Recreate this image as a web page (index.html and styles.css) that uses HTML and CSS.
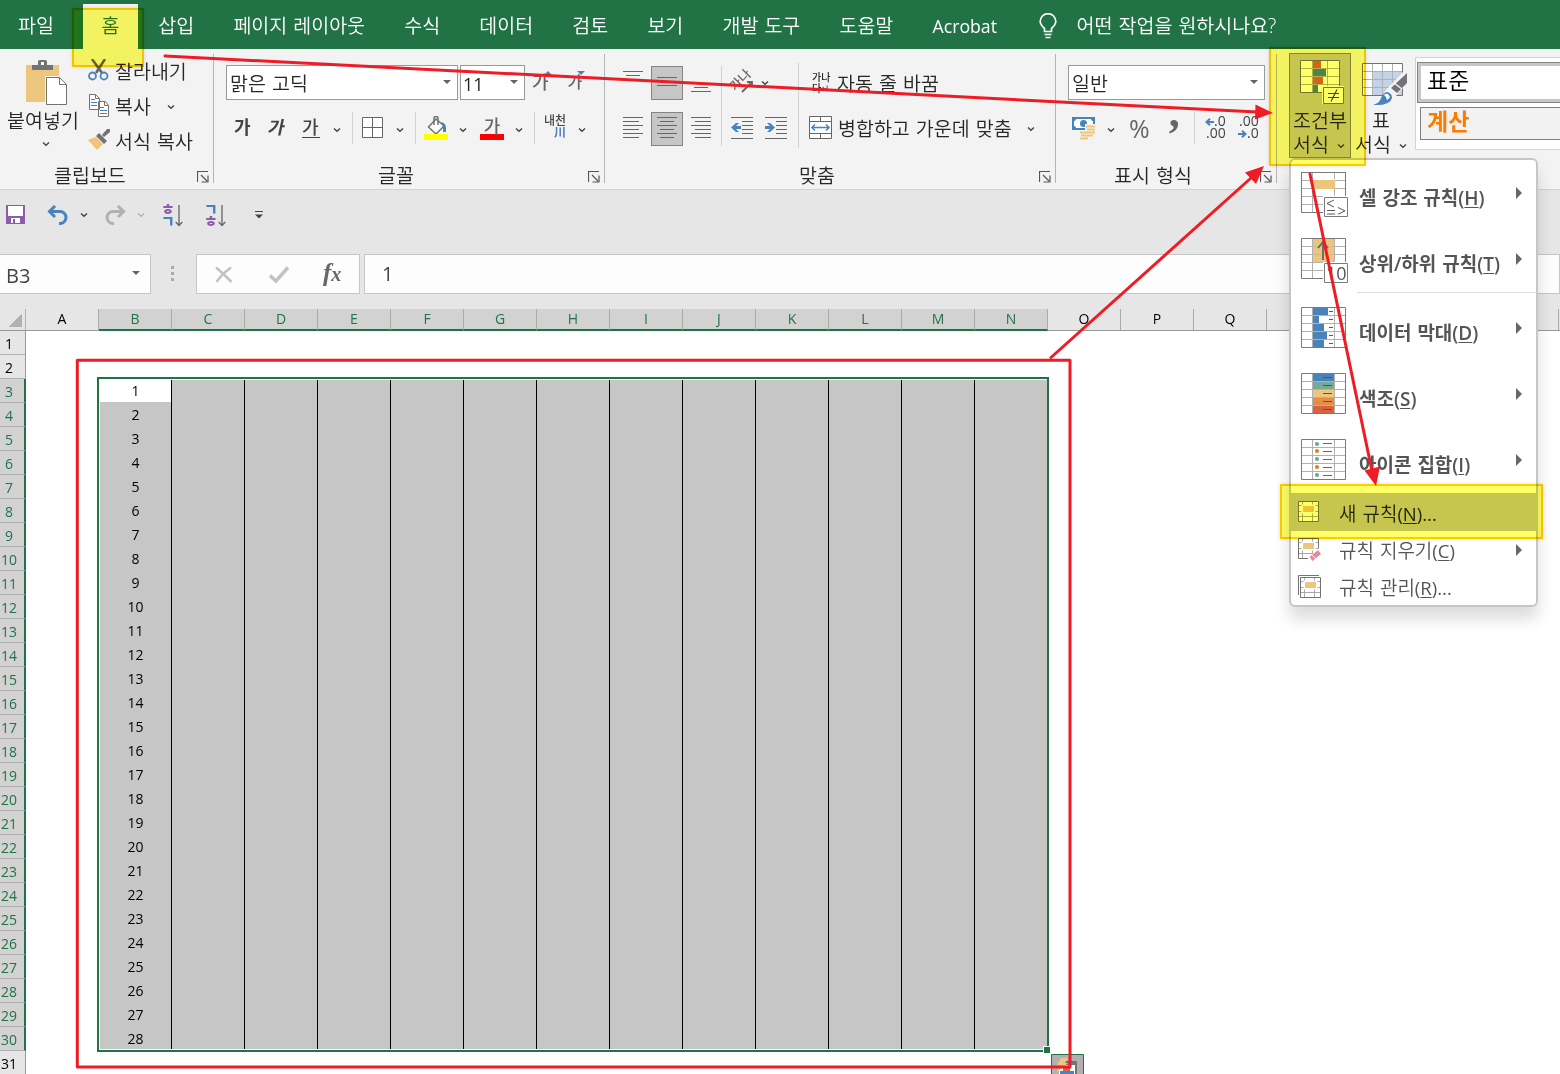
FILE: index.html
```html
<!DOCTYPE html>
<html lang="ko">

<head>
    <meta charset="UTF-8">
    <meta name="viewport" content="width=device-width, initial-scale=1.0">
    <title>조건부 서식</title>
    <link rel="stylesheet" href="styles.css">
</head>

<body>
    <!-- 공용 아이콘 -->
    <svg class="defs">
        <symbol id="chev" viewBox="0 0 8 6"><path d="M1 1.500 4 4.300 7 1.500" fill="none" stroke="currentColor" stroke-width="1.400"/></symbol>
        <symbol id="launch" viewBox="0 0 12 12"><path d="M.5 11V.5H11M4 4l6 6M11 4.500V11H4.500" fill="none" stroke="#555" stroke-width="1.200"/></symbol>
        <symbol id="table" viewBox="0 0 45 41"><path d="M0 0h45v41H0z" fill="#fff"/><path d="M11.500 0v41M33.500 0v41M0 8.500h45M0 16.500h45M0 24.500h45M0 32.500h45" stroke="#b1b1b1" fill="none"/><path d="M.5.5h44v40H.5z" fill="none" stroke="#7a7a7a"/></symbol>
        <symbol id="smalltable" viewBox="0 0 21 21"><path d="M.5.5h20v20H.5z" fill="#fff"/><path d="M4.500 1v19M14.500 1v19M1 4.500h19M1 10.500h19M1 15.500h19" stroke="#aaa" fill="none"/><path d="M3.500 3.500h14v9h-14z" fill="#fff"/><path d="M5 5h11v6H5z" fill="#edc57c"/><path d="M.5.5h20v20H.5z" fill="none" stroke="#737373"/></symbol>
    </svg>

    <!-- 리본 탭 -->
    <div class="tabs">
        <a class="tab first">파일</a>
        <a class="tab on">홈</a>
        <a class="tab">삽입</a>
        <a class="tab">페이지 레이아웃</a>
        <a class="tab">수식</a>
        <a class="tab">데이터</a>
        <a class="tab">검토</a>
        <a class="tab">보기</a>
        <a class="tab">개발 도구</a>
        <a class="tab">도움말</a>
        <a class="tab latin">Acrobat</a>
        <svg class="bulb" width="18" height="26" viewBox="0 0 18 26"><path d="M5.500 18.500v-3C3 13 1.200 11.500 1.200 8.500a7.800 7.800 0 0 1 15.600 0c0 3-1.800 4.500-4.300 7v3z M5.500 21.500h7M6.500 24.500h5" fill="none" stroke="#fff" stroke-width="1.700"/></svg>
        <span class="tell">어떤 작업을 원하시나요?</span>
    </div>

    <!-- 리본 -->
    <div class="ribbon">
        <div class="group clip">
            <div class="body">
                <div class="paste">
                    <svg width="42" height="46" viewBox="0 0 42 46"><path d="M0 5h33v37H0z" fill="#edc57c"/><path d="M6 5h6V1.500Q12 0 14 0h5q2 0 2 1.500V5h6v5H6z" fill="#737373"/><path d="M15 2h3v3h-3z" fill="#fff"/><path d="M19 16h22v30H19z" fill="#f3f3f3"/><path d="M20.500 17.500h13l7 7v20h-20z" fill="#fff" stroke="#737373"/><path d="M33.500 17.500v7h7" fill="none" stroke="#737373"/></svg>
                    <span>붙여넣기</span>
                    <svg class="chev"><use href="#chev"/></svg>
                </div>
                <div class="cliplist">
                    <div class="line"><svg width="22" height="22" viewBox="0 0 22 22"><path d="M4 0l10 14M17 0L8 14" stroke="#666" stroke-width="2.600" fill="none"/><circle cx="4.500" cy="17" r="3.500" fill="none" stroke="#4a82ba" stroke-width="1.800"/><circle cx="16" cy="17" r="3.500" fill="none" stroke="#4a82ba" stroke-width="1.800"/></svg>잘라내기</div>
                    <div class="line"><svg width="22" height="23" viewBox="0 0 22 23"><g fill="#fff" stroke="#737373"><path d="M1.500.5h6l4 4v11h-10zM10.500 7.500h7l3 4v11h-10z"/><path d="M7.500.5v4h4M16.500 7.500v4h4" fill="none"/></g><path d="M3 5.500h4M3 8.500h6M3 11.500h6M12 13.500h4M12 16.500h7M12 19.500h7" stroke="#4a82ba"/></svg>복사<svg class="chev"><use href="#chev"/></svg></div>
                    <div class="line"><svg width="22" height="22" viewBox="0 0 22 22"><path d="M0 11l8-3 7 7-6 6z" fill="#edc57c"/><path d="M8 7l3-3 8 8-3 3zM14 6l5-6h3v3l-6 5z" fill="#737373"/></svg>서식 복사</div>
                </div>
            </div>
            <div class="name">클립보드<svg class="launch"><use href="#launch"/></svg></div>
        </div>

        <div class="group font">
            <div class="body rows">
                <div class="row">
                    <div class="select face">맑은 고딕<i class="tri"></i></div>
                    <div class="select size">11<i class="tri"></i></div>
                    <b class="grow">가<i class="up"></i></b>
                    <b class="shrink">가<i class="down"></i></b>
                </div>
                <div class="row second">
                    <b class="ga">가</b><b class="ga it">가</b><b class="ga un">가</b>
                    <svg class="chev c1"><use href="#chev"/></svg>
                    <i class="bar"></i>
                    <svg width="21" height="21" viewBox="0 0 21 21"><path d="M.5.5h20v20H.5zM10.500 0v21M0 10.500h21" fill="#fff" stroke="#666"/></svg>
                    <svg class="chev c2"><use href="#chev"/></svg>
                    <i class="bar b2"></i>
                    <svg class="fill" width="24" height="24" viewBox="0 0 24 24"><path d="M12 3l8 7-8 8-7.500-7z" fill="#fff" stroke="#737373" stroke-width="1.500"/><path d="M10 9V2q0-1.500 2-1.500T14 2v7" fill="none" stroke="#737373" stroke-width="1.500"/><path d="M17 6q5 1 5 6v4h-3v-6z" fill="#4a82ba"/><path d="M0 18h24v6H0z" fill="#ff0"/></svg>
                    <svg class="chev c3"><use href="#chev"/></svg>
                    <b class="fcolor">가</b>
                    <svg class="chev c3"><use href="#chev"/></svg>
                    <i class="bar b3"></i>
                    <span class="phon">내천<em>川</em></span>
                    <svg class="chev c4"><use href="#chev"/></svg>
                </div>
            </div>
            <div class="name">글꼴<svg class="launch"><use href="#launch"/></svg></div>
        </div>

        <div class="group align">
            <div class="body">
                <div class="aligns">
                    <svg width="32" height="34" viewBox="0 0 32 34"><path d="M6 5.500h20M9 9.500h14" stroke="#666"/></svg>
                    <svg class="on" width="32" height="34" viewBox="0 0 32 34"><path d="M6 11.500h20M6 19.500h20" stroke="#666"/></svg>
                    <svg width="32" height="34" viewBox="0 0 32 34"><path d="M9 21.500h14M6 25.500h20" stroke="#666"/></svg>
                    <svg width="32" height="34" viewBox="0 0 32 34"><path d="M6 5.500h20M6 9.500h16M6 13.500h20M6 17.500h16M6 21.500h20M6 25.500h16" stroke="#666"/></svg>
                    <svg class="on" width="32" height="34" viewBox="0 0 32 34"><path d="M6 5.500h20M9 9.500h14M6 13.500h20M9 17.500h14M6 21.500h20M9 25.500h14" stroke="#666"/></svg>
                    <svg width="32" height="34" viewBox="0 0 32 34"><path d="M6 5.500h20M10 9.500h16M6 13.500h20M10 17.500h16M6 21.500h20M10 25.500h16" stroke="#666"/></svg>
                </div>
                <div class="indents">
                    <div class="orient"><span>가나</span><svg width="16" height="16" viewBox="0 0 16 16"><path d="M1 15L11 5M6 5h5v5" fill="none" stroke="#666" stroke-width="1.800"/></svg><svg class="chev"><use href="#chev"/></svg></div>
                    <div class="ind">
                        <svg width="23" height="22" viewBox="0 0 23 22"><path d="M0 .5h22M11 4.500h11M11 8.500h11M11 12.500h11M11 16.500h11M0 21.500h22" stroke="#666"/><path d="M0 10.500l5-4.500h3l-3 3h5v3H5l3 3H5z" fill="#4a82ba"/></svg>
                        <svg width="23" height="22" viewBox="0 0 23 22"><path d="M0 .5h22M11 4.500h11M11 8.500h11M11 12.500h11M11 16.500h11M0 21.500h22" stroke="#666"/><path d="M10 10.500L5 6H2l3 3H0v3h5l-3 3h3z" fill="#4a82ba"/></svg>
                    </div>
                </div>
                <div class="merge">
                    <div class="wraptext"><span class="mini">가나<br>다<em>↵</em></span>자동 줄 바꿈</div>
                    <div class="mergetext"><svg width="23" height="23" viewBox="0 0 23 23"><path d="M.5.5h22v22H.5zM0 5.500h23M0 17.500h23M11.500 0v5M11.500 18v5" fill="#fff" stroke="#666"/><path d="M3 11.500h17M6 8.500l-3 3 3 3M17 8.500l3 3-3 3" fill="none" stroke="#4a82ba" stroke-width="1.500"/></svg>병합하고 가운데 맞춤<svg class="chev"><use href="#chev"/></svg></div>
                </div>
            </div>
            <div class="name">맞춤<svg class="launch"><use href="#launch"/></svg></div>
        </div>

        <div class="group number">
            <div class="body rows">
                <div class="row">
                    <div class="select format">일반<i class="tri"></i></div>
                </div>
                <div class="row second">
                    <svg class="money" width="24" height="23" viewBox="0 0 24 23"><path d="M0 0h23v13H0z" fill="#4a82ba"/><path d="M2 4q2 0 2-2h15q0 2 2 2v5q-2 0-2 2H4q0-2-2-2z" fill="#fff"/><circle cx="11.500" cy="6.500" r="3.500" fill="#4a82ba"/><path d="M13 7h11v16H7v-9h6z" fill="#f3f3f3"/><path d="M14 9.500h9M15 12.500h8M14 15.500h9M8 15.500h8M9 18.500h8M8 21.500h8M16 18.500h5" stroke="#edc57c" stroke-width="2.200"/></svg>
                    <svg class="chev c1"><use href="#chev"/></svg>
                    <span class="pct">%</span>
                    <span class="comma">,</span>
                    <i class="bar"></i>
                    <span class="dec"><svg width="9" height="8" viewBox="0 0 9 8"><path d="M9 4H1.500M5 .8L1.500 4 5 7.200" fill="none" stroke="#4a82ba" stroke-width="2"/></svg>.0<br>.00</span>
                    <span class="dec">.00<br><svg width="9" height="8" viewBox="0 0 9 8"><path d="M0 4h7.500M4 .8L7.500 4 4 7.200" fill="none" stroke="#4a82ba" stroke-width="2"/></svg>.0</span>
                </div>
            </div>
            <div class="name">표시 형식<svg class="launch"><use href="#launch"/></svg></div>
        </div>

        <div class="styles">
            <div class="cond">
                <svg width="44" height="44" viewBox="0 0 44 44"><path d="M.5.5h39v32H.5z" fill="#fff"/><path d="M13 1h8v7h-8zM13 17h10v7H13z" fill="#d96241"/><path d="M13 9h13v7H13zM13 25h5v7h-5z" fill="#4d84b8"/><path d="M12.500 0v33M27.500 0v33M0 8.500h40M0 16.500h40M0 24.500h40" stroke="#b1b1b1"/><path d="M.5.5h39v32H.5z" fill="none" stroke="#737373"/><path d="M22 26h22v18H22z" fill="#fff"/><path d="M23.500 27.500h20v16h-20z" fill="#fff" stroke="#737373"/><path d="M28 33.500h11M28 37.500h11M37 29.500l-6 12" stroke="#444" stroke-width="1.200"/></svg>
                <span>조건부</span>
                <span>서식 <svg class="chev"><use href="#chev"/></svg></span>
            </div>
            <div class="fmt">
                <svg width="45" height="44" viewBox="0 0 45 44"><path d="M.5.5h40v32H.5z" fill="#fff"/><path d="M11 8h30v24H11z" fill="#c2d3e8"/><path d="M10.500 0v33M20.500 0v33M30.500 0v33M0 8.500h41M0 16.500h41M0 24.500h41" stroke="#b1b1b1"/><path d="M.5.5h40v32H.5z" fill="none" stroke="#737373"/><path d="M42 8L24 27l-9 15h14l4-8 12-14V8z" fill="#f3f3f3"/><path d="M45 10v10L35 30l-6-5z" fill="#737373"/><path d="M32 20l8 6" stroke="#f3f3f3" stroke-width="1.500"/><path d="M11 42q7-2 8-7 2-5 6-6 5 1 5 6-2 8-19 7z" fill="#4a82ba"/><path d="M22 32q2-2 4-1l2 3q-1 2-3 3 0-3-3-5z" fill="#fff"/></svg>
                <span>표</span>
                <span>서식 <svg class="chev"><use href="#chev"/></svg></span>
            </div>
            <div class="gallery">
                <div class="cell normal">표준</div>
                <div class="cell calc">계산</div>
            </div>
        </div>
    </div>

    <!-- 빠른 실행 도구 -->
    <div class="quick">
        <svg class="save" width="19" height="19" viewBox="0 0 19 19"><path d="M0 0h19v19H0z" fill="#8e5bae"/><path d="M2 1h15v10H2zM5 13h9v5H5z" fill="#fff"/><path d="M7 14h2v4H7z" fill="#8e5bae"/></svg>
        <svg class="undo" width="22" height="20" viewBox="0 0 22 20"><path d="M8 1L2.500 6.500 8 12M3 6.500h10a6 6 0 0 1 0 12h-1" fill="none" stroke="#4a82ba" stroke-width="3"/></svg>
        <svg class="chev q1"><use href="#chev"/></svg>
        <svg class="redo" width="22" height="20" viewBox="0 0 22 20"><path d="M14 1l5.500 5.500L14 12M19 6.500H9a6 6 0 0 0 0 12h1" fill="none" stroke="#b1b1b1" stroke-width="3"/></svg>
        <svg class="chev q2"><use href="#chev"/></svg>
        <span class="sort"><b>ㅎ</b><b class="blue">ㄱ</b></span>
        <svg class="sortarrow" width="8" height="22" viewBox="0 0 8 22"><path d="M4 0v20.500M.7 17L4 20.500 7.300 17" fill="none" stroke="#666" stroke-width="1.300"/></svg>
        <span class="sort s2"><b class="blue">ㄱ</b><b>ㅎ</b></span>
        <svg class="sortarrow" width="8" height="22" viewBox="0 0 8 22"><path d="M4 0v20.500M.7 17L4 20.500 7.300 17" fill="none" stroke="#666" stroke-width="1.300"/></svg>
        <svg class="custom" width="8" height="8" viewBox="0 0 8 8"><path d="M0 .5h8" stroke="#444"/><path d="M0 3.500h8l-4 4z" fill="#444"/></svg>
    </div>

    <!-- 수식 입력줄 -->
    <div class="formula">
        <div class="namebox">B3<i class="tri"></i></div>
        <div class="dots"><i></i><i></i><i></i></div>
        <div class="fx">
            <svg width="18" height="18" viewBox="0 0 18 18"><path d="M1 1.500Q9 8 16.500 16M16 1.500Q7 8 1.500 16" fill="none" stroke="#c3c3c3" stroke-width="2.600"/></svg>
            <svg width="20" height="18" viewBox="0 0 20 18"><path d="M1 9.500L7 15 19 1.500" fill="none" stroke="#c3c3c3" stroke-width="3.500"/></svg>
            <em>f<small>x</small></em>
        </div>
        <div class="input">1</div>
    </div>

    <!-- 시트 -->
    <div class="sheet">
        <div class="cols"><div class="corner"></div></div>
        <div class="main">
            <div class="rownums"></div>
            <div class="cells">
                <div class="select-area">
                    <i class="handle"></i>
                </div>
            </div>
        </div>
        <svg class="analysis" width="33" height="20" viewBox="0 0 33 20"><path d="M.5.5h32v24H.5z" fill="#b1b1b1" stroke="#217346"/><path d="M13 7h12v15H8v-8z" fill="#fff"/><path d="M14 7h12v14h-2V11H14z" fill="#737373"/><path d="M12 13h7v4h-7z" fill="#d96241"/><path d="M9 17h14v5H9z" fill="#4a82ba"/><path d="M10 4h7l-3 5h3L5 19l4-8H6z" fill="#edc57c"/></svg>
    </div>

    <!-- 조건부 서식 메뉴 -->
    <div class="menu">
        <div class="item big">
            <svg width="48" height="46" viewBox="0 0 48 46"><use href="#table" width="45" height="41"/><path d="M11 1h23v40H11z" fill="#fff"/><path d="M11.500 1v40M33.500 1v6M33.500 17v8" stroke="#b1b1b1"/><path d="M12 8h22v9H12z" fill="#edc57c"/><path d="M12 24.500h12M12 32.500h12" stroke="#b1b1b1"/><path d="M.5.5h44v40H.5z" fill="none" stroke="#7a7a7a"/><path d="M22 24h26v22H22z" fill="#fff"/><path d="M23.500 25.500h23v19h-23z" fill="#fff" stroke="#7a7a7a"/><path d="M33 28l-7 3.500 7 3.500M26 38.500h8M26 42h8M37 35.500l7 3.300-7 3.500" fill="none" stroke="#555"/></svg>
            <span>셀 강조 규칙(<u>H</u>)</span><i class="sub"></i>
        </div>
        <div class="item big">
            <svg width="48" height="46" viewBox="0 0 48 46"><use href="#table" width="45" height="41"/><path d="M12 1h21v23H12z" fill="#edc57c"/><path d="M12 8.500h21M12 16.500h21" stroke="#d2b98b"/><path d="M22 22V5M17 10l5-6 5 6" fill="none" stroke="#666" stroke-width="1.800"/><path d="M22 24h26v22H22z" fill="#fff"/><path d="M23.500 25.500h23v19h-23z" fill="#fff" stroke="#7a7a7a"/><text x="25" y="42" class="ten">10</text></svg>
            <span>상위/하위 규칙(<u>T</u>)</span><i class="sub"></i>
        </div>
        <div class="rule"></div>
        <div class="item big">
            <svg width="48" height="46" viewBox="0 0 48 46"><use href="#table" width="45" height="41"/><path d="M12 1h15v7H12zM12 9h6v7h-6zM12 17h11v7H12zM12 25h14v7H12zM12 33h11v7H12z" fill="#4a82ba"/><path d="M28 4.500h4M28 12.500h4M28 20.500h4M28 28.500h4M28 36.500h4" stroke="#555"/></svg>
            <span>데이터 막대(<u>D</u>)</span><i class="sub"></i>
        </div>
        <div class="item big">
            <svg width="48" height="46" viewBox="0 0 48 46"><use href="#table" width="45" height="41"/><path d="M12 1h21v7H12z" fill="#4a82ba"/><path d="M12 9h21v7H12z" fill="#76aa98"/><path d="M12 17h21v7H12z" fill="#edc57c"/><path d="M12 25h21v7H12z" fill="#e58c45"/><path d="M12 33h21v7H12z" fill="#d96241"/><path d="M22 4.500h9M22 12.500h9M22 20.500h9M22 28.500h9M22 36.500h9" stroke="#555"/></svg>
            <span>색조(<u>S</u>)</span><i class="sub"></i>
        </div>
        <div class="item big">
            <svg width="48" height="46" viewBox="0 0 48 46"><use href="#table" width="45" height="41"/><g fill="#6ba594"><circle cx="16" cy="5" r="2"/><circle cx="16" cy="20" r="2"/><circle cx="16" cy="36" r="2"/></g><g fill="#e87722"><circle cx="16" cy="12" r="2"/><circle cx="16" cy="28" r="2"/></g><path d="M22 4.500h9M22 12.500h9M22 20.500h9M22 28.500h9M22 36.500h9" stroke="#666"/></svg>
            <span>아이콘 집합(<u>I</u>)</span><i class="sub"></i>
        </div>
        <div class="item hover">
            <svg width="24" height="24" viewBox="0 0 24 24"><use href="#smalltable" width="21" height="21"/></svg>
            <span>새 규칙<s>(<u>N</u>)...</s></span>
        </div>
        <div class="item">
            <svg width="24" height="24" viewBox="0 0 24 24"><use href="#smalltable" width="21" height="21"/><path d="M22 9h2v15H10v-4l10-9z" fill="#fff"/><path d="M11.500 19l8.500-7 3 4-8.500 7z" fill="#e68aa0"/><path d="M14 17l4 4" stroke="#fff"/></svg>
            <span>규칙 지우기<s>(<u>C</u>)</s></span><i class="sub"></i>
        </div>
        <div class="item">
            <svg width="24" height="24" viewBox="0 0 24 24"><path d="M.5 20V.5H21" fill="none" stroke="#737373"/><use href="#smalltable" x="2" y="2" width="21" height="21"/></svg>
            <span>규칙 관리<s>(<u>R</u>)...</s></span>
        </div>
    </div>

    <!-- 강조 표시와 화살표 -->
    <div class="mark m1"></div>
    <div class="mark m2"></div>
    <div class="mark m3"></div>
    <svg class="arrows" width="1560" height="1074" viewBox="0 0 1560 1074">
        <g fill="none" stroke="#ee1c25" stroke-width="3" stroke-linecap="round">
            <path d="M77.300 360.300h992.700v706.700H77.300z" stroke-linejoin="round"/>
            <path d="M165 56l1092 56M1051 357.500l200-179.500M1310 174l62 297"/>
        </g>
        <path d="M1273 113l-18 6.500.5-15zM1264 166l-8 18-11-11.500zM1376 486l-11.500-15.500 15.500-4z" fill="#ee1c25"/>
    </svg>

    <script src="script.js"></script>
</body>

</html>
```
FILE: styles.css
```css
* {
    margin: 0;
    padding: 0;
    box-sizing: border-box;
}

body {
    width: 1560px;
    height: 1074px;
    overflow: hidden;
    position: relative;
    background-color: #fff;
    font-family: "Open Sans", "Noto Sans CJK KR", sans-serif;
    font-size: 19.5px;
    font-weight: 350;
    line-height: 24px;
    color: #262626;
    word-spacing: 1px;
}

svg {
    display: block;
    flex: none;
}

i,
em {
    font-style: normal;
}

s {
    font-weight: 400;
    text-decoration: none;
}

.defs {
    position: absolute;
    width: 0;
    height: 0;
}

.chev {
    width: 8px;
    height: 6px;
    color: #444;
}

.tri {
    border: 4px solid transparent;
    border-top-color: #666;
    border-bottom: 0;
}

/* 탭 */
.tabs {
    display: flex;
    height: 49px;
    padding-top: 4px;
    background-color: #217346;
    color: #fff;
}

.tab {
    padding: 0 19.6px;
    line-height: 44px;
    white-space: nowrap;
}

.tab.first {
    width: 83px;
    padding-left: 18px;
}

.tab.on {
    width: 55px;
    padding: 0;
    text-align: center;
    background-color: #f3f3f3;
    color: #217346;
}

.tab.on + .tab {
    padding-left: 20.3px;
}

.tab.latin {
    font-size: 17.7px;
    line-height: 45px;
    font-weight: 400;
}

.bulb {
    margin: 9px 20px 0 22px;
}

.tell {
    line-height: 44px;
}

/* 리본 */
.ribbon {
    display: flex;
    height: 141px;
    background-color: #f3f3f3;
    border-bottom: 1px solid #d2d2d2;
}

.group {
    height: 129px;
    margin-top: 5px;
    border-right: 1px solid #b5b5b5;
    flex: none;
}

.body {
    display: flex;
    height: 108px;
}

.rows {
    flex-direction: column;
}

.name {
    display: flex;
    justify-content: center;
    height: 24px;
    line-height: 26px;
    padding-left: 12px;
    margin-top: 1px;
}

.name .launch {
    width: 12px;
    height: 12px;
    margin: 8px 4px 0 auto;
}

.row {
    display: flex;
    height: 35px;
    margin-top: 11px;
}

.row.second {
    height: 34px;
    margin-top: 12px;
}

.bar {
    width: 1px;
    height: 32px;
    background-color: #d2d2d2;
}

.select {
    display: flex;
    align-items: center;
    justify-content: space-between;
    height: 35px;
    padding: 2px 6px 0 3px;
    border: 1px solid #999;
    background-color: #fff;
    white-space: nowrap;
}

.select .tri {
    margin-top: -3px;
}

.clip {
    width: 214px;
}

.clip .name {
    padding-left: 54px;
}

.paste {
    width: 86px;
    display: flex;
    flex-direction: column;
    align-items: center;
}

.paste svg:first-child {
    margin: 6px 0 0 7px;
}

.paste .chev {
    margin: 8px 0 0 5px;
}

.paste span {
    margin-top: 3px;
}

.cliplist .line {
    display: flex;
    height: 35px;
    align-items: center;
    gap: 5px;
    margin-left: 2px;
}

.line > svg:first-child {
    margin-top: -3px;
}

.line .chev {
    margin-left: 11px;
}

.font {
    width: 391px;
}

.font .name {
    padding-left: 164px;
}

.face {
    width: 232px;
    margin-left: 12px;
}

.size {
    width: 65px;
    margin-left: 2px;
    padding-left: 2px;
    font-size: 18px;
    font-weight: 400;
}

.grow,
.shrink,
.ga,
.fcolor {
    color: #666;
    font-weight: 500;
    position: relative;
    line-height: 34px;
    font-size: 18px;
}

.grow {
    margin-left: 7px;
}

.shrink {
    margin-left: 19px;
    font-size: 16px;
}

.up,
.down {
    position: absolute;
    top: 6px;
    right: -3px;
    border: 4px solid transparent;
}

.up {
    top: 2px;
    border-bottom-color: #4a82ba;
}

.down {
    border-top-color: #4a82ba;
}

.second .ga {
    width: 18px;
    font-weight: 700;
    color: #444;
    margin-left: 20px;
    line-height: 30px;
}

.second .ga + .ga {
    margin-left: 16px;
}

.ga.it {
    transform: skewX(-12deg);
}

.second .ga.un {
    height: 26px;
    font-weight: 500;
    border-bottom: 1px solid #444;
}

.second .chev {
    margin-top: 15px;
}

.second .c1 {
    margin-left: 13px;
}

.font .second svg:nth-of-type(2) {
    margin: 5px 0 0 9px;
}

.second .bar {
    margin-left: 11px;
}

.second .c2 {
    margin-left: 13px;
}

.second .b2 {
    margin-left: 11px;
}

.fill {
    margin: 4px 0 0 8px;
}

.second .c3 {
    margin-left: 11px;
}

.fcolor {
    width: 24px;
    height: 28px;
    margin-left: 13px;
    text-align: center;
    border-bottom: 6px solid #f00;
    line-height: 28px;
}

.second .b3 {
    margin-left: 11px;
}

.phon {
    display: flex;
    flex-direction: column;
    width: 22px;
    margin-left: 9px;
    font-size: 12px;
    font-weight: 500;
    line-height: 12px;
    padding-top: 3px;
    white-space: nowrap;
    color: #444;
}

.phon em {
    color: #4a82ba;
    align-self: flex-end;
    font-weight: 700;
}

.second .c4 {
    margin-left: 12px;
}

/* 맞춤 */
.align {
    width: 451px;
}

.align .name {
    padding-left: 194px;
}

.aligns {
    display: grid;
    grid-template-columns: repeat(3, 32px);
    grid-auto-rows: 34px;
    column-gap: 2px;
    row-gap: 12px;
    margin: 12px 0 0 12px;
}

.aligns .on {
    background-color: #c6c6c6;
    outline: 1px solid #858585;
    outline-offset: -1px;
}

.indents {
    width: 77px;
    height: 80px;
    margin: 12px 0 0 4px;
    border-left: 1px solid #d2d2d2;
}

.orient {
    display: flex;
    height: 46px;
    padding-left: 6px;
}

.orient span {
    transform: rotate(-45deg);
    font-size: 13px;
    font-weight: 500;
    width: 28px;
    height: 26px;
    color: #666;
}

.orient svg {
    margin: 11px 0 0 -15px;
}

.orient .chev {
    margin: 14px 0 0 4px;
}

.ind {
    display: flex;
    gap: 11px;
    padding: 5px 0 0 9px;
}

.merge {
    height: 85px;
    margin-top: 9px;
    border-left: 1px solid #d2d2d2;
}

.wraptext {
    display: flex;
    height: 42px;
    padding: 9px 0 0 13px;
}

.mini {
    width: 25px;
    font-size: 10px;
    line-height: 11px;
    font-weight: 500;
}

.mini em {
    color: #4a82ba;
    font-weight: 700;
}

.mergetext {
    display: flex;
    align-items: center;
    height: 48px;
    padding: 0 0 0 10px;
    white-space: nowrap;
    gap: 6px;
}

.mergetext svg:first-child {
    margin-top: -3px;
}

.mergetext .chev {
    margin-left: 9px;
}

/* 표시 형식 */
.number {
    width: 221px;
}

.number .name {
    padding-left: 58px;
}

.format {
    width: 197px;
    margin-left: 12px;
}

.money {
    margin: 5px 0 0 16px;
}

.second .money + .chev {
    margin-left: 11px;
}

.pct {
    margin: 4px 0 0 14px;
    font-size: 25px;
    font-weight: 400;
    color: #666;
}

.comma {
    width: 12px;
    margin: -11px 0 0 19px;
    font-size: 44px;
    font-weight: 700;
    font-family: "Liberation Serif", serif;
    color: #666;
}

.number .second .bar {
    margin-left: 13px;
}

.dec {
    width: 25px;
    margin: 3px 0 0 6px;
    font-size: 14px;
    font-weight: 400;
    line-height: 12px;
    color: #444;
    text-align: right;
}

.dec + .dec {
    margin-left: 8px;
}

.dec svg {
    display: inline-block;
}

.styles {
    display: flex;
    height: 140px;
    overflow: hidden;
}

.cond,
.fmt {
    display: flex;
    flex-direction: column;
    align-items: center;
    width: 62px;
    white-space: nowrap;
}

.cond {
    height: 105px;
    margin: 4px 0 0 12px;
    background-color: #c6c6c6;
    border: 1px solid #858585;
    flex: none;
}

.cond > svg {
    margin: 6px 0 5px 3px;
}

.cond span:last-child {
    margin-left: -2px;
}

.fmt {
    margin: 4px 0 0 -1px;
    flex: none;
}

.fmt > svg {
    margin: 10px 0 2px 7px;
}

.styles .chev {
    display: inline-block;
    margin-left: 2px;
    vertical-align: 3px;
}

.gallery {
    width: 200px;
    height: 93px;
    margin: 8px 0 0 3px;
    padding: 4px 0 0 1px;
    border: 1px solid #d2d2d2;
    background-color: #fff;
    flex: none;
}

.cell.normal {
    height: 41px;
    border: 1px solid #858585;
    outline: 3px solid #c6c6c6;
    outline-offset: -4px;
    line-height: 34px;
    padding-left: 9px;
    color: #000;
    font-size: 23px;
}

.cell.calc {
    height: 33px;
    margin: 4px 0 0 3px;
    padding-left: 6px;
    border: 1px solid #7f7f7f;
    background-color: #f2f2f2;
    color: #fa7d00;
    font-size: 23px;
    font-weight: 700;
    line-height: 27px;
}

/* 빠른 실행 */
.quick {
    display: flex;
    height: 64px;
    padding-top: 15px;
    background-color: #e6e6e6;
}

.save {
    margin-left: 6px;
}

.undo {
    margin-left: 22px;
}

.quick .q1 {
    margin: 7px 0 0 11px;
}

.redo {
    margin-left: 16px;
}

.quick .q2 {
    margin: 7px 0 0 11px;
    color: #b1b1b1;
}

.sort {
    display: flex;
    flex-direction: column;
    width: 13px;
    margin: -2px 0 0 16px;
    color: #8e5bae;
    font-size: 15px;
    line-height: 12px;
    font-weight: 700;
}

.sort .blue {
    color: #4a82ba;
}

.sort.s2 {
    margin-left: 21px;
}

.sortarrow {
    margin-left: 1px;
}

.custom {
    margin: 6px 0 0 29px;
}

/* 수식 입력줄 */
.formula {
    display: flex;
    height: 55px;
    background-color: #e6e6e6;
    font-weight: 400;
    font-size: 20px;
    color: #444;
}

.namebox,
.fx,
.input {
    height: 40px;
    border: 1px solid #c6c6c6;
    background-color: #fdfdfd;
    line-height: 42px;
}

.namebox {
    display: flex;
    justify-content: space-between;
    width: 151px;
    padding: 0 10px 0 6px;
    border-left: 0;
}

.namebox .tri {
    margin-top: 16px;
}

.dots {
    width: 45px;
    padding: 12px 0 0 20px;
}

.dots i {
    display: block;
    width: 3px;
    height: 3px;
    margin-bottom: 3px;
    background-color: #aaa;
}

.fx {
    display: flex;
    width: 164px;
    padding: 11px 0 0 18px;
}

.fx svg + svg {
    margin-left: 36px;
}

.fx em {
    margin: -6px 0 0 34px;
    font: italic 700 25px/26px "Liberation Serif", serif;
    color: #666;
}

.fx small {
    font-size: 20px;
}

.input {
    flex: 1;
    margin-left: 4px;
    padding-left: 17px;
    line-height: 38px;
}

/* 시트 */
.sheet {
    position: relative;
    font-size: 14px;
    font-weight: 400;
    color: #000;
}

.cols {
    display: flex;
    height: 22px;
    background-color: #e6e6e6;
    border-bottom: 1px solid #999;
}

.corner {
    width: 26px;
    border-right: 1px solid #b1b1b1;
    background: linear-gradient(135deg, transparent 50%, #b1b1b1 50%) 8px 4px / 14px 14px no-repeat;
    flex: none;
}

.col {
    width: 73px;
    height: 21px;
    border-right: 1px solid #aaa;
    text-align: center;
    line-height: 20px;
    flex: none;
}

.col.on {
    height: 22px;
    background-color: #d2d2d2;
    border-bottom: 2px solid #217346;
    color: #217346;
}

.main {
    display: flex;
    height: 743px;
    overflow: hidden;
}

.rownums {
    width: 26px;
}

.rownum {
    height: 24px;
    padding-right: 7px;
    border-right: 1px solid #999;
    border-bottom: 1px solid #b1b1b1;
    background-color: #e6e6e6;
    text-align: center;
    line-height: 25px;
}

.rownum.on {
    background-color: #d2d2d2;
    border-right: 2px solid #217346;
    padding-right: 6px;
    color: #217346;
}

.cells {
    padding: 46px 0 0 71px;
}

.select-area {
    display: flex;
    width: 952px;
    height: 675px;
    padding: 1px;
    border: 2px solid #217346;
    position: relative;
}

.column {
    width: 73px;
    background-color: #c6c6c6;
    border-right: 1px solid #000;
    text-align: center;
    flex: none;
}

.column:first-child {
    width: 72px;
}

.column.last {
    width: 72px;
    border-right: 0;
}

.column div {
    height: 24px;
    line-height: 26px;
}

.column div:first-child {
    height: 22px;
    line-height: 21px;
    background-color: #fff;
}

.handle {
    position: absolute;
    right: -4px;
    bottom: -4px;
    width: 8px;
    height: 8px;
    background-color: #217346;
    border: 1px solid #fff;
}

.analysis {
    position: absolute;
    left: 1051px;
    bottom: 0;
}

/* 메뉴 */
.menu {
    position: absolute;
    left: 1289px;
    top: 158px;
    width: 249px;
    height: 449px;
    border: 2px solid #c6c6c6;
    border-radius: 6px;
    background-color: #fff;
    box-shadow: 0 12px 16px rgba(0, 0, 0, 0.14);
    color: #555;
}

.item {
    display: flex;
    height: 37px;
    padding: 7px 0 0 7px;
    font-size: 19px;
}

.item span {
    width: 180px;
    margin: 1px 0 0 17px;
    line-height: 24px;
    white-space: nowrap;
}

.item s {
    font-size: 18.5px;
}

.item u {
    text-decoration-thickness: 1px;
    text-underline-offset: 2px;
}

.item.big {
    height: 66px;
    padding: 12px 0 0 10px;
    font-weight: 600;
}

.big span {
    width: 156px;
    margin: 14px 0 0 10px;
}

.item.hover {
    height: 38px;
    padding-top: 8px;
    background-color: #c6c6c6;
    color: #262626;
}

.sub {
    height: 12px;
    margin: 6px 0 0 -3px;
    border: 6px solid transparent;
    border-left-color: #666;
    border-right: 0;
}

.big .sub {
    margin: 15px 0 0 1px;
}

.rule {
    height: 1px;
    margin: 0 0 2px 66px;
    background-color: #dedede;
}

.ten {
    font-size: 18px;
    font-weight: 400;
    fill: #555;
}

/* 표시 */
.mark {
    position: absolute;
    background-color: #ff6;
    border: 2px solid #fc0;
    mix-blend-mode: multiply;
    box-shadow: 0 0 4px rgba(0, 0, 0, 0.12);
}

.m1 {
    left: 72px;
    top: 8px;
    width: 72px;
    height: 59px;
}

.m2 {
    left: 1269px;
    top: 47px;
    width: 97px;
    height: 119px;
}

.m3 {
    left: 1280px;
    top: 484px;
    width: 263px;
    height: 55px;
}

.arrows {
    position: absolute;
    left: 0;
    top: 0;
}
```
FILE: script.js
```js
var cols = document.querySelector(".cols");
var rownums = document.querySelector(".rownums");
var area = document.querySelector(".select-area");
var handle = document.querySelector(".handle");

// 열 머리글 A ~ U
for (var i = 0; i < 21; i++) {
    var col = document.createElement("div");
    col.className = i >= 1 && i <= 13 ? "col on" : "col";
    col.innerHTML = String.fromCharCode(65 + i);
    cols.appendChild(col);
}

// 행 머리글 1 ~ 31
for (var i = 1; i <= 31; i++) {
    var row = document.createElement("div");
    row.className = i >= 3 && i <= 30 ? "rownum on" : "rownum";
    row.innerHTML = i;
    rownums.appendChild(row);
}

// 선택 영역 B3:N30
for (var i = 0; i < 13; i++) {
    var column = document.createElement("div");
    column.className = i == 12 ? "column last" : "column";
    if (i == 0) {
        for (var j = 1; j <= 28; j++) {
            column.innerHTML += "<div>" + j + "</div>";
        }
    }
    area.insertBefore(column, handle);
}
```
